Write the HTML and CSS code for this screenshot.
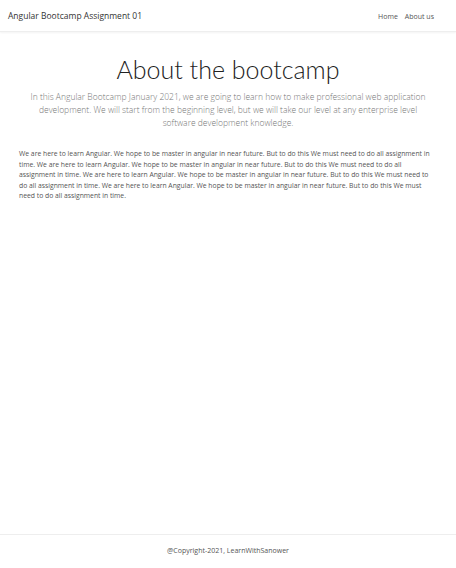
FILE: index.html
```html
<!DOCTYPE html>
<html lang="en">
<head>
<meta charset="utf-8">
<title>Angular Bootcamp Assignment 01</title>
<link rel="stylesheet" href="styles.css">
</head>
<body>
<div class="page">
  <nav class="navbar">
    <a class="brand" href="#">Angular Bootcamp Assignment 01</a>
    <ul class="nav">
      <li><a href="#">Home</a></li>
      <li><a href="#">About us</a></li>
    </ul>
  </nav>
  <main class="main">
    <section class="hero">
      <h1 class="title">About the bootcamp</h1>
      <p class="lead">In this Angular Bootcamp January 2021, we are going to learn how to make professional web application development. We will start from the beginning level, but we will take our level at any enterprise level software development knowledge.</p>
    </section>
    <p class="text">We are here to learn Angular. We hope to be master in angular in near future. But to do this We must need to do all assignment in time. We are here to learn Angular. We hope to be master in angular in near future. But to do this We must need to do all assignment in time. We are here to learn Angular. We hope to be master in angular in near future. But to do this We must need to do all assignment in time. We are here to learn Angular. We hope to be master in angular in near future. But to do this We must need to do all assignment in time.</p>
  </main>
  <footer class="footer">@Copyright-2021, LearnWithSanower</footer>
</div>
</body>
</html>
```
FILE: styles.css
```css
* { box-sizing: border-box; }
html, body { margin: 0; padding: 0; }
body {
  font-family: "Open Sans", "Noto Sans", sans-serif;
  color: #212529;
  background: #fff;
}
.page {
  min-height: 100vh;
  display: flex;
  flex-direction: column;
}
.navbar {
  height: 32px;
  display: flex;
  align-items: center;
  justify-content: space-between;
  padding: 0 22px 2px 8px;
  border-bottom: 1px solid #eee;
  box-shadow: 0 1px 2px rgba(0,0,0,0.05);
}
.brand {
  font-size: 8.5px;
  color: #333;
  text-decoration: none;
  margin-top: 1px;
}
.nav {
  list-style: none;
  display: flex;
  gap: 7px;
  margin: 5px 0 0;
  padding: 0;
  font-size: 7px;
  line-height: 1.4;
}
.nav a {
  color: #555;
  text-decoration: none;
}
.main {
  flex: 1;
  padding: 22px 19px 0;
}
.hero { text-align: center; }
.title {
  font-family: Lato, "Open Sans", sans-serif;
  font-size: 25px;
  font-weight: 300;
  margin: 0 0 6px;
  line-height: 1.2;
  color: #222;
}
.lead {
  font-size: 8.5px;
  font-weight: 300;
  line-height: 13px;
  color: #777;
  margin: 0 10px;
}
.text {
  font-size: 6.8px;
  line-height: 10.6px;
  color: #555;
  margin: 20px 0 0;
}
.footer {
  border-top: 1px solid #eee;
  height: 34px;
  padding-bottom: 3px;
  display: flex;
  align-items: center;
  justify-content: center;
  font-size: 7px;
  color: #555;
}
```
